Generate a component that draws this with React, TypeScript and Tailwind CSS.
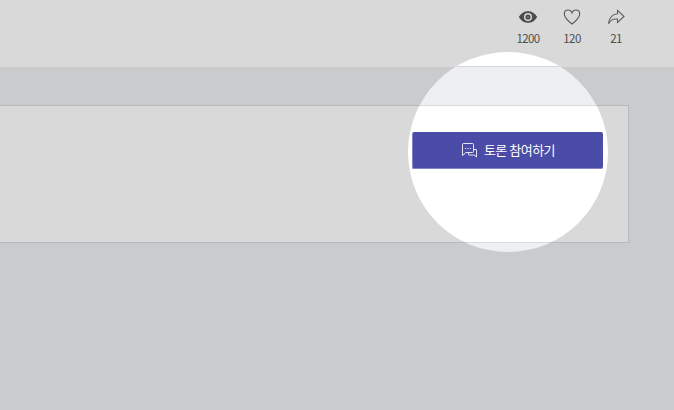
import React from "react";

function Stat({ icon, value }: { icon: React.ReactNode; value: string }) {
  return (
    <div className="flex w-11 flex-col items-center">
      <div className="flex h-[18px] items-center justify-center">{icon}</div>
      <span className="mt-1 text-[11.5px] leading-[17px] tracking-[-0.6px] text-[#5c5c5c]">{value}</span>
    </div>
  );
}

const EyeIcon = () => (
  <svg width="20" height="14" viewBox="0 0 20 14">
    <path d="M.8 7C3 3 6.200 1.200 10 1.200S17 3 19.200 7c-2.200 4-5.400 5.800-9.200 5.800S3 11 .8 7Z" fill="#5a5a5a" />
    <circle cx="10" cy="7" r="3.300" fill="#5a5a5a" stroke="#fff" strokeWidth="1.500" />
    <circle cx="10" cy="7" r="1" fill="#fff" fillOpacity=".3" />
  </svg>
);

const HeartIcon = () => (
  <svg width="18" height="18" viewBox="0 0 18 18" fill="none" stroke="#6c6c6c" strokeWidth="1.150">
    <path d="M9 16C6.500 14 1.300 9.500 1.300 5.900 1.300 3.500 3 2 5.100 2 6.900 2 8.300 3.100 9 4.700 9.700 3.100 11.100 2 12.900 2c2.100 0 3.800 1.500 3.800 3.900C16.700 9.500 11.500 14 9 16Z" />
  </svg>
);

const ShareIcon = () => (
  <svg width="18" height="18" viewBox="0 0 18 18" fill="none" stroke="#707070" strokeWidth="1.100" strokeLinejoin="miter">
    <path d="M10.500 2.300 17 8.500l-6.500 6v-3.400C6.500 10.700 3.400 12.200 1.400 15.600 2.200 9.700 5.500 6.200 10.500 5.700Z" />
  </svg>
);

const ChatIcon = () => (
  <svg width="17" height="16" viewBox="0 0 17 16" fill="none" stroke="#fff" strokeWidth="1" strokeOpacity=".85">
    <path d="M2.500 1.500h9q1 0 1 1v7q0 1-1 1H5l-3.500 3V2.500q0-1 1-1Z" />
    <path d="M12.500 7.500H15q.5 0 .5.500v7l-2.500-2H8q-.5 0-.5-.5v-2" />
    <path d="M4 6.500h1.200m1.200 0h1.200m1.200 0H10" />
  </svg>
);

export default function App() {
  return (
    <div className="relative flex h-[410px] w-[674px] flex-col overflow-hidden bg-[#eeeff1] font-['Noto_Sans_CJK_KR',sans-serif]">
      <header className="flex h-[67px] shrink-0 justify-end bg-white pt-2 pr-9">
        <Stat icon={<EyeIcon />} value="1200" />
        <Stat icon={<HeartIcon />} value="120" />
        <Stat icon={<ShareIcon />} value="21" />
      </header>
      <main className="pt-[38px]">
        <section className="flex h-[138px] w-[629px] justify-end border-y border-r border-[#d7dadf] bg-white pt-[26px] pr-[25px]">
          <button className="flex h-[37px] w-[191px] items-center justify-center gap-1.5 rounded-[2px] border-b border-l border-[#8183c4] bg-[#4a4ca8] text-[13px] tracking-[-0.5px] text-white">
            <ChatIcon />
            <span className="-mt-px">토론 참여하기</span>
          </button>
        </section>
      </main>
      <div className="pointer-events-none absolute top-[52px] left-[408px] size-[200px] rounded-full shadow-[0_0_0_700px_rgba(0,0,0,0.15)]">
        <div className="size-full overflow-hidden rounded-full pt-[14px]">
          <div className="h-px bg-[#d5d7db]" />
        </div>
      </div>
    </div>
  );
}
